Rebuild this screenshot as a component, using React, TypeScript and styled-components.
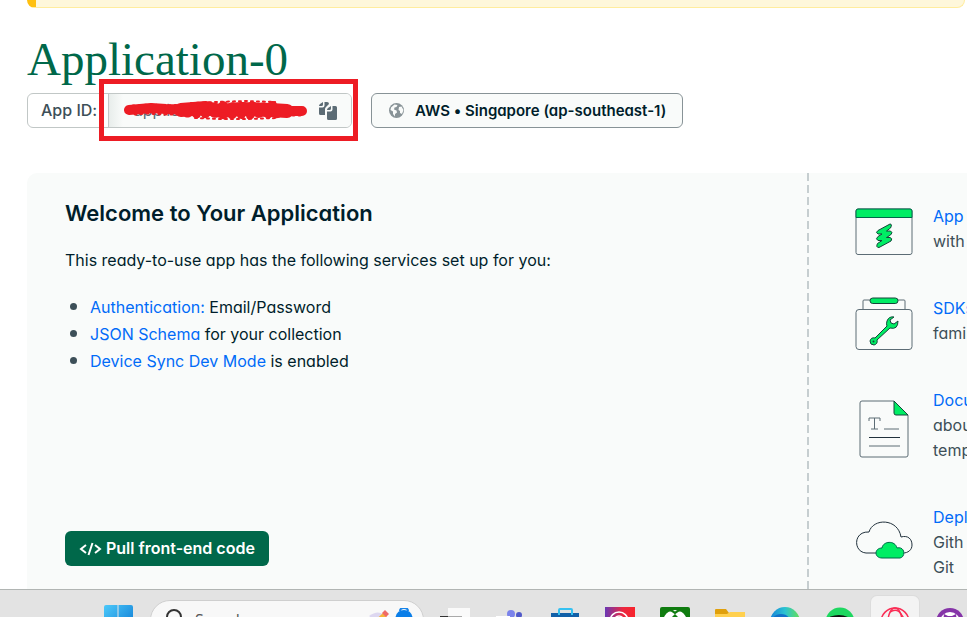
import React from 'react';
import styled, { createGlobalStyle, css } from 'styled-components';

const Global = createGlobalStyle`
  *, *::before, *::after { box-sizing: border-box; }
  body {
    margin: 0;
    background: #fff;
    color: #001e2b;
    font-family: Inter, "Liberation Sans", sans-serif;
    font-feature-settings: "cv11", "calt" 0;
    font-size: 16px;
    line-height: 25px;
  }
  h1, h2, p, ul { margin: 0; padding: 0; }
`;

const Screen = styled.div`
  height: 100vh;
  display: flex;
  flex-direction: column;
  overflow: hidden;
`;

const Page = styled.main`
  flex: 1;
  min-height: 0;
  display: flex;
  flex-direction: column;
  padding-left: 27px;
`;

const Banner = styled.div`
  flex: none;
  height: 8px;
  margin-right: 2px;
  border: 1px solid #ffec9e;
  border-top: 0;
  border-left: 9px solid #ffc010;
  border-radius: 0 0 12px 12px;
  background: #fef7db;
`;

const Title = styled.h1`
  margin-top: 27px;
  color: #00684a;
  font-family: "Liberation Serif", serif;
  font-size: 47px;
  font-weight: 400;
  line-height: 49px;
`;

const Details = styled.div`
  display: flex;
  gap: 19px;
  margin-top: 9px;
`;

const AppId = styled.div`
  position: relative;
  display: flex;
  width: 325px;
  height: 35px;
  border: 1px solid #c1c7c6;
  border-radius: 6px;
  background: #fff;
`;

const AppIdLabel = styled.label`
  flex: none;
  width: 81px;
  padding: 4px 0 0 13px;
  border-right: 1px solid #c1c7c6;
  color: #3d4f58;
  font-weight: 500;
  white-space: nowrap;
`;

const AppIdInput = styled.input`
  flex: 1;
  min-width: 0;
  padding: 0 0 0 24px;
  border: 0;
  background: linear-gradient(90deg, #e8edeb, #f9fbfa 14px);
  color: #5c6c75;
  font: inherit;
`;

const CopyButton = styled.button`
  display: flex;
  align-items: center;
  justify-content: center;
  width: 46px;
  padding: 0;
  border: 0;
  border-radius: 0 5px 5px 0;
  background: #f9fbfa;
`;

const Highlight = styled.div`
  position: absolute;
  top: -15px;
  right: -7px;
  width: 259px;
  height: 62px;
  border: 5px solid #ed1c24;
  pointer-events: none;
`;

const Scribble = styled.svg`
  position: absolute;
  top: 15px;
  left: 17px;
`;

const Region = styled.button`
  display: flex;
  align-items: center;
  gap: 10px;
  height: 35px;
  padding: 0 16px;
  border: 1px solid #889397;
  border-radius: 6px;
  background: #f9fbfa;
  color: #001e2b;
  font: inherit;
  font-size: 15px;
  font-weight: 600;
  white-space: nowrap;
`;

const Panel = styled.section`
  flex: 1;
  min-height: 0;
  display: flex;
  margin-top: 45px;
  border-radius: 10px 0 0 0;
  background: #f9fbfa;
`;

const Welcome = styled.div`
  flex: 1;
  display: flex;
  flex-direction: column;
  align-items: flex-start;
  padding: 24px 24px 23px 38px;
`;

const Heading = styled.h2`
  font-size: 22px;
  font-weight: 600;
  line-height: 32px;
`;

const Intro = styled.p`
  margin-top: 19px;
`;

const Services = styled.ul`
  margin-top: 21px;
  list-style: none;
`;

const Service = styled.li`
  display: flex;
  align-items: center;
  line-height: 27px;
  &::before {
    content: "";
    width: 7px;
    height: 7px;
    margin: 0 13px 2px 5px;
    border-radius: 50%;
    background: #3d4f58;
  }
`;

const Link = styled.a`
  color: #016bf8;
  text-decoration: none;
`;

const PullButton = styled.button`
  display: flex;
  align-items: center;
  gap: 4px;
  height: 35px;
  margin-top: auto;
  padding: 0 14px;
  border: 0;
  border-radius: 6px;
  background: #00684a;
  color: #fff;
  font: inherit;
  font-weight: 600;
`;

const Resources = styled.aside`
  flex: none;
  width: 160px;
  padding: 31px 0 0 48px;
  background: repeating-linear-gradient(180deg, #c6ced0 0 8px, transparent 8px 12px) left / 2px 100% no-repeat;
`;

const Resource = styled.div<{ $height: number; $iconTop: number }>`
  display: flex;
  align-items: flex-start;
  gap: 20px;
  height: ${p => p.$height}px;
  color: #3d4f58;
  white-space: nowrap;
  svg { flex: none; margin-top: ${p => p.$iconTop}px; }
`;

const Taskbar = styled.footer`
  flex: none;
  display: flex;
  align-items: flex-start;
  height: 28px;
  padding: 0 0 0 103px;
  border-top: 1px solid #b1b5b3;
  background: #e3e3e3;
  overflow: hidden;
`;

const StartButton = styled.button`
  flex: none;
  padding: 14px 0 0;
  border: 0;
  background: transparent;
  svg { display: block; }
`;

const SearchBox = styled.label`
  flex: none;
  display: flex;
  align-items: flex-start;
  width: 274px;
  height: 40px;
  margin: 10px 0 0 17px;
  padding: 7px 0 0 14px;
  border: 1px solid #cfcfcf;
  border-radius: 20px;
  background: #f8f8f8;
`;

const SearchInput = styled.input`
  flex: 1;
  min-width: 0;
  height: 24px;
  padding: 0 0 0 12px;
  border: 0;
  background: transparent;
  font: 16px "Open Sans", sans-serif;
  &::placeholder { color: #555; opacity: 1; }
`;

const Tasks = styled.nav`
  display: flex;
  margin: 6px 0 0 7px;
`;

const Task = styled.button<{ $active?: boolean }>`
  flex: none;
  width: 48px;
  height: 44px;
  margin-right: 7px;
  padding: 8px 0 0;
  border: 0;
  border-radius: 6px;
  background: transparent;
  ${p => p.$active && css`background: #f3f3f3; box-shadow: 0 0 0 1px #dcdcdc;`}
  svg { display: block; margin: 0 auto; }
`;

const AppsIcon = () => (
  <svg width="58" height="48" viewBox="0 0 58 48" fill="none" stroke="#5c6c75">
    <rect x="1" y="1" width="56" height="45.500" rx="2" />
    <path d="M1 9.500V3a2 2 0 0 1 2-2h52a2 2 0 0 1 2 2v6.500z" fill="#00ed64" stroke="#00684a" />
    <path d="M35 16 23 22.500q-3 2 0 3.500h4l-4 2.500q-3 2.500 0 4h4l-4.500 3q-2 4 1.500 4l12-6.500q2-2.500-1-3.500h-3.500l4-2.500q3-2.500 0-4h-4l4-3q2-4-.5-4z" fill="#00ed64" stroke="#14453a" strokeLinejoin="round" />
  </svg>
);

const SdkIcon = () => (
  <svg width="58" height="54" viewBox="0 0 58 54" fill="none" stroke="#5c6c75">
    <path d="M8 13V4q0-1 1-1h40q1 0 1 1v9" />
    <rect x="1" y="12.500" width="56" height="40" rx="3" fill="#f9fbfa" />
    <rect x="15" y="1" width="28" height="5.500" rx="2.750" fill="#00ed64" stroke="#14453a" />
    <path d="M39 20q-5-1-7 4-1 3 0 5L20 41q-4-1-5 3 0 4 4 4 4-1 3-5l13-12q8 2 8-7l-4 3-3-1-1-3z" fill="#00ed64" stroke="#14453a" strokeLinejoin="round" />
    <circle cx="18.500" cy="44.500" r="1" fill="#14453a" stroke="none" />
  </svg>
);

const DocIcon = () => (
  <svg width="58" height="58" viewBox="0 0 58 58" fill="none" stroke="#5c6c75">
    <path d="M39 1H7q-2 0-2 2v52q0 2 2 2h44q2 0 2-2V15z" />
    <path d="M39 1v12q0 2 2 2h12z" fill="#00ed64" stroke="#14453a" />
    <path d="M14 21v-3h11v3M19.500 18v11M16 29h7M29 29h15M14 46h31" />
    <path d="M14 37.500h31" stroke="#21313c" />
  </svg>
);

const CloudIcon = () => (
  <svg width="58" height="40" viewBox="0 0 58 40" fill="none" stroke="#21313c">
    <path d="M22 33H11C-2 32-2 11 14 12 18-2 43-2 46 17c7-2 11 2 11 8 0 5-4 8-9 8" />
    <path d="M27 38c-8 0-8-10 0-10 1-7 13-8 15 0 8-2 9 9 3 10z" fill="#00ed64" stroke="#00684a" />
  </svg>
);

const CopyIcon = () => (
  <svg width="20" height="20" viewBox="0 0 20 20" fill="#5c6c75">
    <path d="M5 1v2.500Q5 5 3.500 5H1Q1 4 2 3zM6.500 1H9q2 0 2 2l-3 3q-1 1-1 2v6H2.500Q1 14 1 12.500v-6h3.500Q6.500 6.500 6.500 4.500z" />
    <path d="M13 5v2.500Q13 9 11.500 9H9Q9 8 10 7zM14.500 5h3Q19 5 19 6.500v11q0 1.500-1.500 1.500h-7Q9 19 9 17.500v-7h3.500q2 0 2-2z" />
  </svg>
);

const GlobeIcon = () => (
  <svg width="17" height="17" viewBox="0 0 17 17">
    <circle cx="8.500" cy="8.500" r="7.500" fill="#889397" />
    <path d="M3 5.500 6.500 2.500l3 .5-1 2-2 .5-.5 2 2.500 1 .5 2-2 1.500v2.500L5 12V9.500L2.500 8zM11 5l2.500-.5L15.500 8 14 12l-2-1V9L10.500 8z" fill="#f9fbfa" />
  </svg>
);

const CodeIcon = () => (
  <svg width="23" height="14" viewBox="0 0 23 14" fill="none" stroke="currentColor" strokeWidth="2">
    <path d="M7 3 2 7l5 4M16 3l5 4-5 4M13.500 1l-4 12" />
  </svg>
);

const scribbleStrokes = [
  { d: 'M8 11 30 9 45 10 95 12 140 12 181 12', width: 10 },
  { d: 'M60 11 85 9 100 12 120 10 150 11 166 12', width: 14 },
  { d: 'M72 9 84 7 92 8 104 6 116 8 128 6 140 8 152 6 160 9', width: 8, dash: '1 9' },
  { d: 'M66 15 80 16 92 15 104 17 116 16 128 17 140 15 152 16 162 15', width: 7, dash: '1 8' },
  { d: 'M12 7 30 6 46 7 62 6M14 15 26 14 40 15 56 15M164 8 180 9M166 16 182 16', width: 3, dash: '1 5' },
  { d: 'M70 4 96 3 124 2 154 3M74 19 98 20 126 20 156 19', width: 2, dash: '2 4' },
];

const Windows = () => (
  <svg width="30" height="30" viewBox="0 0 30 30">
    <defs>
      <linearGradient id="win" x1="0" y1="0" x2="1" y2="1">
        <stop stopColor="#4cc9fa" /><stop offset="1" stopColor="#0873d0" />
      </linearGradient>
    </defs>
    <path d="M1 3q0-2 2-2h11.500v13.500H1zM15.500 1H28q2 0 2 2v11.500H15.500zM1 15.500h13.500V30H1zM15.500 15.500H30V30H15.500z" fill="url(#win)" />
  </svg>
);

const tasks = [
  { name: 'Task view', art: <><path d="M8 1h22v22H8z" fill="#fafafa" /><path d="M0 9h22v20H0z" fill="#333" /><path d="M8 9h14v20H8z" fill="#aaa" /></> },
  { name: 'Teams', art: <><circle cx="16" cy="7" r="4" fill="#7b83eb" /><circle cx="24" cy="8" r="3" fill="#5059c9" /><path d="M10 12h18v16H10z" fill="#5059c9" /><path d="M1 9h14v18H1z" fill="#fff" /><path d="M5 12h8M9 12v10" stroke="#4b53bc" strokeWidth="2" /></> },
  { name: 'Store', art: <><path d="M1 6h28v23H1z" fill="#1260a8" /><path d="M9 8V3q0-1 1-1h11q1 0 1 1v5" stroke="#35c1f1" strokeWidth="2" fill="none" /><path d="M10 12h5v5h-5z" fill="#f25022" /><path d="M16 12h5v5h-5z" fill="#7fba00" /></> },
  { name: 'Creative app', art: <><defs><linearGradient id="cr"><stop stopColor="#6938b5" /><stop offset=".6" stopColor="#eb2840" /><stop offset="1" stopColor="#f8242c" /></linearGradient></defs><path d="M0 0h30v30H0z" fill="url(#cr)" /><g fill="none" stroke="#fff" strokeWidth="1.500"><circle cx="14" cy="14" r="9" /><circle cx="14" cy="14" r="5" /></g></> },
  { name: 'Xbox', art: <><rect width="30" height="30" rx="2" fill="#107c10" /><circle cx="15" cy="15" r="12" fill="#fff" /><path d="M8 3q4 0 7 3 3-3 7-3" stroke="#107c10" strokeWidth="2" fill="none" /><path d="M15 7Q8 13 5 24h20Q22 13 15 7z" fill="#107c10" /></> },
  { name: 'File Explorer', art: <><path d="M0 3q0-1 1-1h10l3 4v5H0z" fill="#e0a00c" /><path d="M0 7h12l3-2h15v23H0z" fill="#ffd04f" /></> },
  { name: 'Edge', art: <><defs><linearGradient id="ed"><stop stopColor="#1683d8" /><stop offset=".5" stopColor="#2bc3d2" /><stop offset="1" stopColor="#66df55" /></linearGradient></defs><circle cx="15" cy="15" r="15" fill="url(#ed)" /><path d="M0 16Q3 7 11 7q9 0 10 10H0z" fill="#1171c9" /><path d="M12 14q3-4 6 0z" fill="#fff" /></> },
  { name: 'Spotify', art: <><circle cx="15" cy="15" r="14.500" fill="#1ed760" /><path d="M6 11q10-4 19 2" fill="none" stroke="#111" strokeWidth="3" strokeLinecap="round" /></> },
  { name: 'Opera GX', art: <g fill="none" stroke="#fa2d55" strokeWidth="1.500"><circle cx="15" cy="15" r="14" /><ellipse cx="15" cy="15" rx="7" ry="14" /><path d="M10 5Q20-1 25 15" /></g> },
  { name: 'GitHub', art: <><circle cx="15" cy="15" r="14" fill="#8534a8" /><circle cx="15" cy="15" r="10" fill="#fff" /><path d="M9 7l4 2h4l4-2 1 8-2 6H10l-2-6z" fill="#8534a8" /></> },
];

const resources = [
  { icon: <AppsIcon />, link: 'App', lines: ['with'], height: 92, iconTop: 4 },
  { icon: <SdkIcon />, link: 'SDKs', lines: ['fami'], height: 92, iconTop: 1 },
  { icon: <DocIcon />, link: 'Docu', lines: ['abou', 'temp'], height: 117, iconTop: 12 },
  { icon: <CloudIcon />, link: 'Depl', lines: ['Gith', 'Git'], height: 80, iconTop: 15 },
];

export default function App() {
  return (
    <Screen>
      <Global />
      <Page>
        <Banner />
        <Title>Application-0</Title>
        <Details>
          <AppId>
            <AppIdLabel htmlFor="app-id">App ID:</AppIdLabel>
            <AppIdInput id="app-id" readOnly defaultValue="application-0" />
            <CopyButton aria-label="Copy App ID"><CopyIcon /></CopyButton>
            <Highlight>
              <Scribble width="190" height="22" viewBox="0 0 190 22" fill="none" stroke="#ed1c24" strokeLinecap="round" strokeLinejoin="round">
                {scribbleStrokes.map(s => <path key={s.d} d={s.d} strokeWidth={s.width} strokeDasharray={s.dash} />)}
              </Scribble>
            </Highlight>
          </AppId>
          <Region><GlobeIcon />AWS • Singapore (ap-southeast-1)</Region>
        </Details>
        <Panel>
          <Welcome>
            <Heading>Welcome to Your Application</Heading>
            <Intro>This ready-to-use app has the following services set up for you:</Intro>
            <Services>
              <Service><span><Link href="#auth">Authentication:</Link> Email/Password</span></Service>
              <Service><span><Link href="#schema">JSON Schema</Link> for your collection</span></Service>
              <Service><span><Link href="#sync">Device Sync Dev Mode</Link> is enabled</span></Service>
            </Services>
            <PullButton><CodeIcon />Pull front-end code</PullButton>
          </Welcome>
          <Resources>
            {resources.map(r => (
              <Resource key={r.link} $height={r.height} $iconTop={r.iconTop}>
                {r.icon}
                <div>
                  <Link href="#docs">{r.link}</Link>
                  {r.lines.map(l => <p key={l}>{l}</p>)}
                </div>
              </Resource>
            ))}
          </Resources>
        </Panel>
      </Page>
      <Taskbar>
        <StartButton aria-label="Start"><Windows /></StartButton>
        <SearchBox>
          <svg width="18" height="20" viewBox="0 0 18 20" fill="none" stroke="#333" strokeWidth="2"><circle cx="9" cy="9" r="7" /></svg>
          <SearchInput placeholder="Search" aria-label="Search" />
          <svg width="56" height="30" viewBox="0 0 56 30">
            <path d="M2 8q8-6 14-2l-4 10z" fill="#ddd7f0" />
            <path d="m4 16 12-11 4 4L9 18z" fill="#f6b53c" /><path d="m15 5 3-3 4 4-3 3z" fill="#ef6a66" />
            <path d="M28 14q0-12 9-12t9 12z" fill="#0a7ee8" /><path d="M33 3q0-3 4-3t4 3" fill="none" stroke="#1583e9" strokeWidth="2" />
          </svg>
        </SearchBox>
        <Tasks>
          {tasks.map(t => (
            <Task key={t.name} aria-label={t.name} $active={t.name === 'Opera GX'}>
              <svg width="30" height="30" viewBox="0 0 30 30">{t.art}</svg>
            </Task>
          ))}
        </Tasks>
      </Taskbar>
    </Screen>
  );
}
